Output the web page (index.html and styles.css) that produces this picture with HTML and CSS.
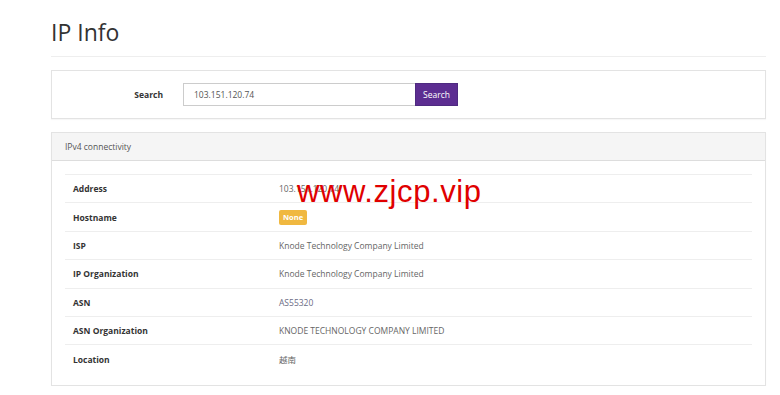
FILE: index.html
```html
<!DOCTYPE html>
<html lang="en">
<head>
<meta charset="utf-8">
<title>IP Info</title>
<link rel="stylesheet" href="styles.css">
</head>
<body>
<div class="container">
  <h1 class="title">IP Info</h1>
  <div class="rule"></div>

  <div class="card search-card">
    <form class="search-form">
      <label class="search-label" for="q">Search</label>
      <div class="input-group">
        <input id="q" class="search-input" type="text" value="103.151.120.74">
        <button class="search-btn" type="button">Search</button>
      </div>
    </form>
  </div>

  <div class="card info-card">
    <div class="card-header">IPv4 connectivity</div>
    <div class="card-body">
      <div class="info-list">
        <div class="row"><div class="key">Address</div><div class="val">103.151.120.74</div></div>
        <div class="row"><div class="key">Hostname</div><div class="val"><span class="badge">None</span></div></div>
        <div class="row"><div class="key">ISP</div><div class="val">Knode Technology Company Limited</div></div>
        <div class="row"><div class="key">IP Organization</div><div class="val">Knode Technology Company Limited</div></div>
        <div class="row"><div class="key">ASN</div><div class="val"><a class="asn">AS55320</a></div></div>
        <div class="row"><div class="key">ASN Organization</div><div class="val">KNODE TECHNOLOGY COMPANY LIMITED</div></div>
        <div class="row"><div class="key">Location</div><div class="val cjk">越南</div></div>
      </div>
    </div>
  </div>
</div>
<div class="watermark">www.zjcp.vip</div>
</body>
</html>
```

FILE: styles.css
```css
html, body {
  margin: 0;
  padding: 0;
  background: #ffffff;
}

body {
  font-family: "Open Sans", "Noto Sans", "Noto Sans CJK SC", sans-serif;
  font-size: 8.5px;
  color: #333333;
  position: relative;
}

.container {
  width: 715px;
  margin-left: 51px;
}

.title {
  margin: 0;
  padding-top: 16px;
  font-size: 23px;
  font-weight: 400;
  line-height: 32px;
  color: #333333;
}

.rule {
  margin-top: 8px;
  border-top: 1px solid #eeeeee;
  height: 0;
}

.card {
  border: 1px solid #e3e3e3;
  background: #ffffff;
  box-shadow: 0 1px 1px rgba(0, 0, 0, 0.03);
}

.search-card {
  margin-top: 13px;
  padding: 12px 0 12px 0;
}

.search-form {
  display: flex;
  align-items: center;
  margin: 0;
}

.search-label {
  width: 111px;
  text-align: right;
  font-weight: 700;
  color: #333333;
  margin-right: 20px;
}

.input-group {
  display: flex;
  height: 23px;
}

.search-input {
  width: 232px;
  height: 23px;
  box-sizing: border-box;
  border: 1px solid #cccccc;
  border-right: none;
  padding: 0 10px;
  font-family: "Open Sans", "Noto Sans", sans-serif;
  font-size: 8.5px;
  color: #555555;
  outline: none;
}

.search-btn {
  width: 43px;
  height: 23px;
  border: 1px solid #4e2a80;
  background: #5c2d91;
  color: #ffffff;
  font-family: "Open Sans", "Noto Sans", sans-serif;
  font-size: 8.5px;
  padding: 0;
}

.info-card {
  margin-top: 13px;
}

.card-header {
  height: 27px;
  line-height: 27px;
  padding-left: 13px;
  background: #f5f5f5;
  border-bottom: 1px solid #dddddd;
  color: #555555;
}

.card-body {
  padding: 13px 13px 12px 13px;
}

.info-list {
  display: flex;
  flex-direction: column;
}

.row {
  display: grid;
  grid-template-columns: 214px 1fr;
  align-items: center;
  height: 28.4px;
  box-sizing: border-box;
  border-top: 1px solid #eeeeee;
}

.key {
  padding-left: 8px;
  font-weight: 700;
  color: #333333;
}

.val {
  color: #666666;
}

.badge {
  display: inline-block;
  background: #f0b840;
  color: #ffffff;
  font-weight: 700;
  font-size: 7.5px;
  line-height: 15px;
  padding: 0 4px;
  border-radius: 2px;
  vertical-align: middle;
}

.asn {
  color: #6b6b85;
  text-decoration: none;
}

.cjk {
  font-family: "Noto Sans CJK SC", sans-serif;
}

.watermark {
  position: absolute;
  left: 297px;
  top: 176px;
  font-family: "Liberation Sans", Arial, sans-serif;
  font-size: 31px;
  letter-spacing: 0.6px;
  line-height: 1;
  color: #e00000;
  white-space: nowrap;
}
```
